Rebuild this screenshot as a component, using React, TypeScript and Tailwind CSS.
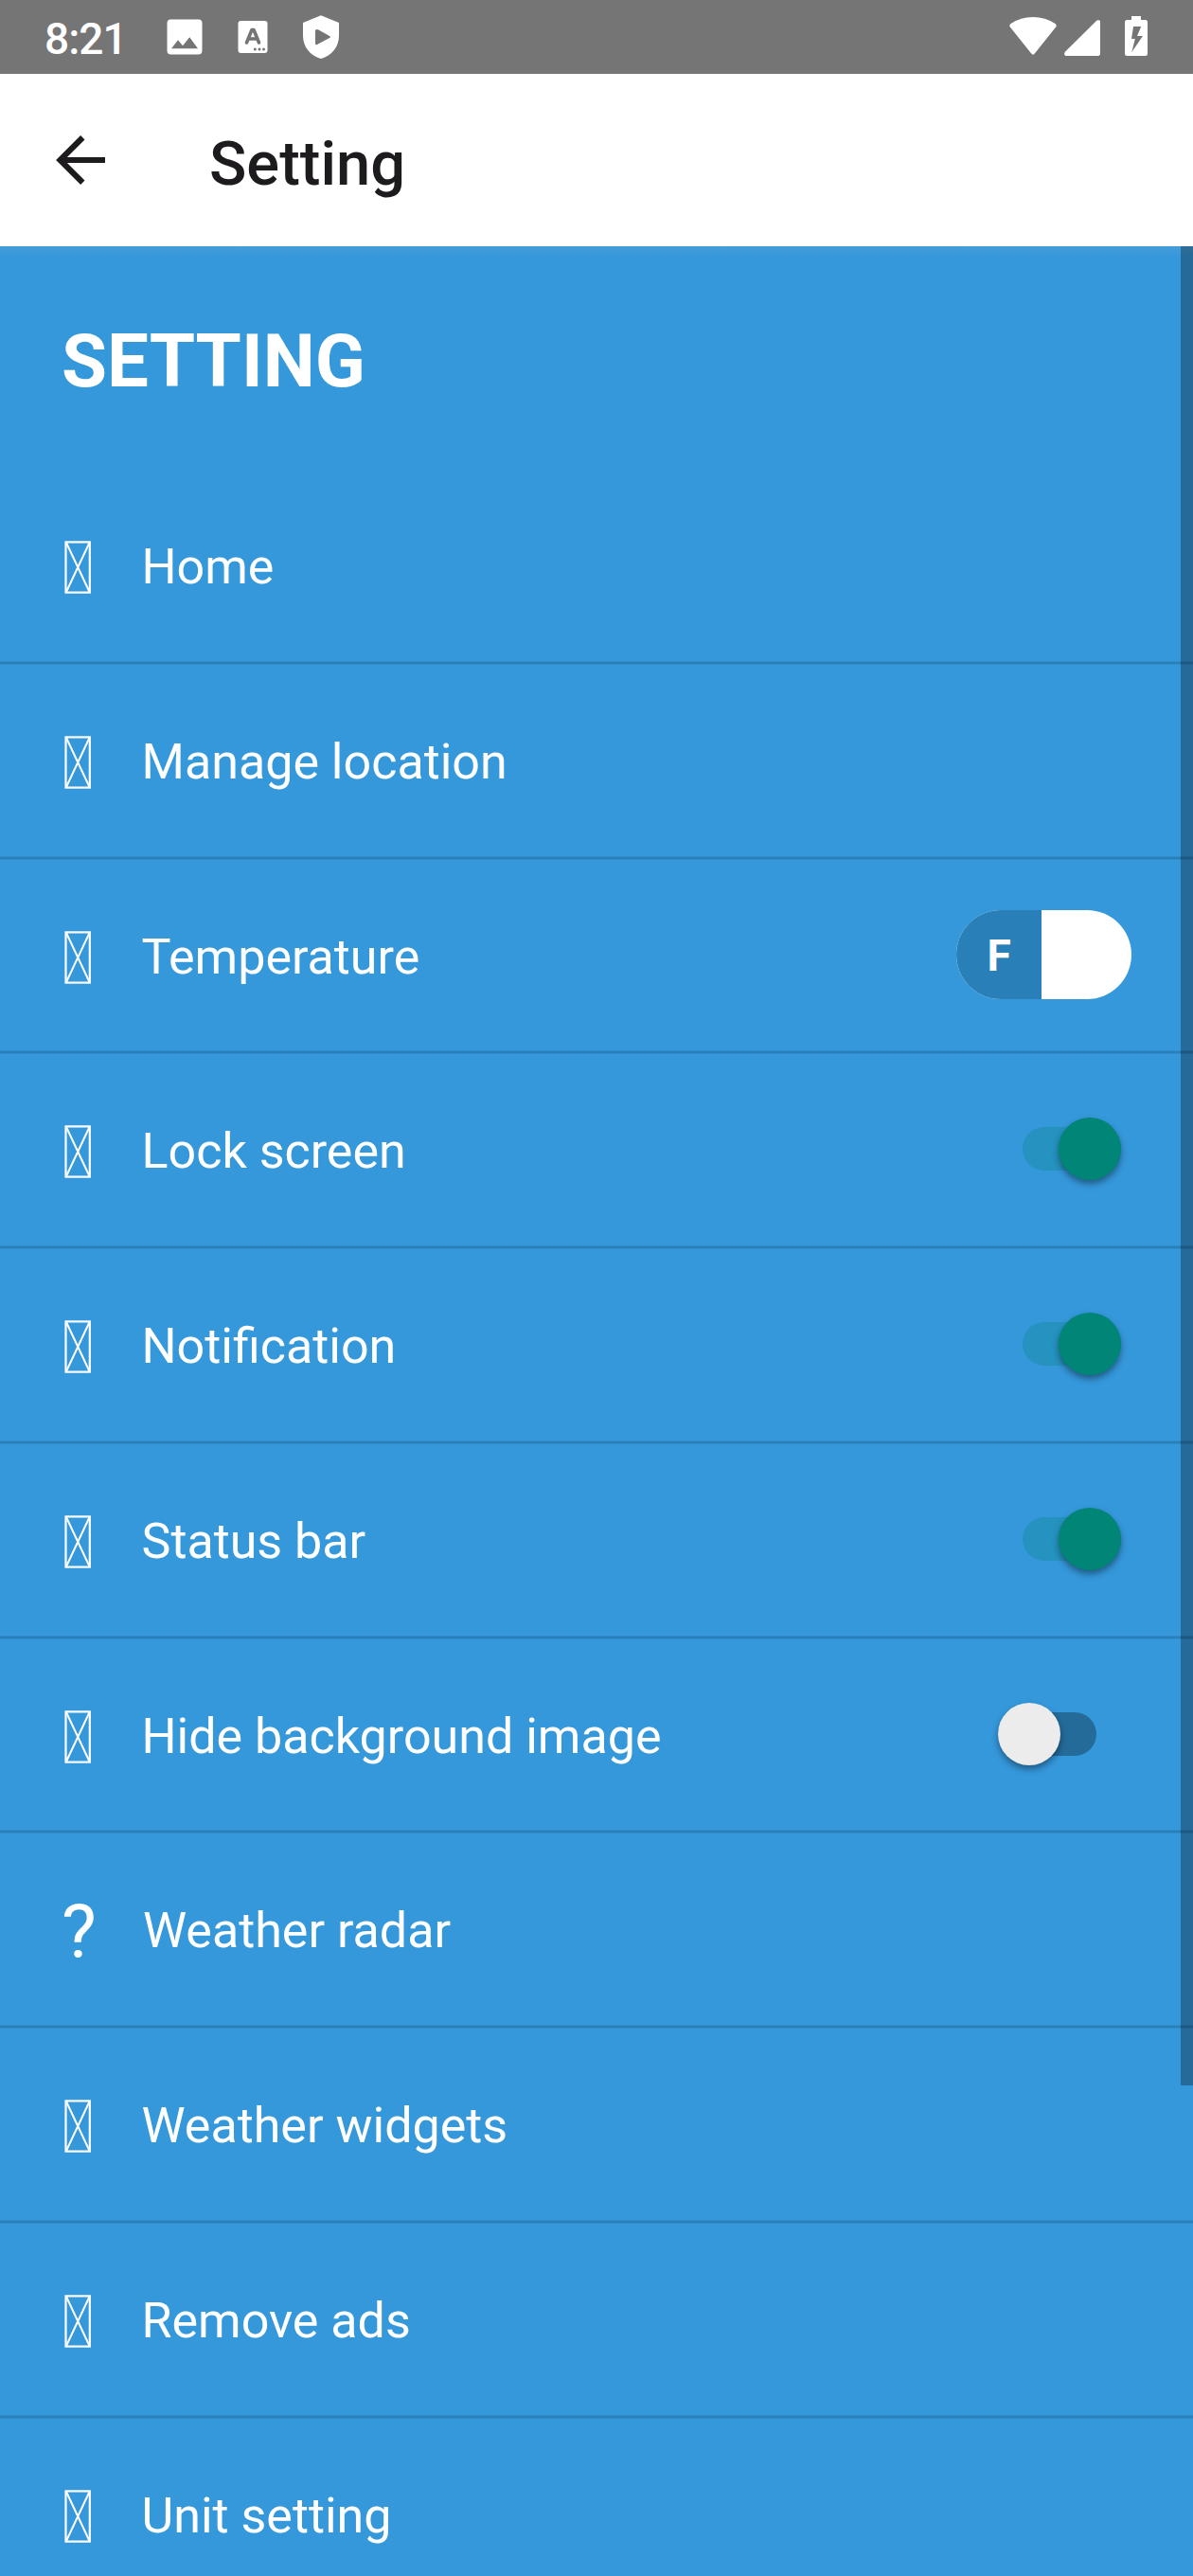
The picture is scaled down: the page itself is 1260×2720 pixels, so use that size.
import React from "react";

type Control = "unit" | "on" | "off";
type Row = { label: string; height: string; control?: Control; glyph?: "question" };

const rows: Row[] = [
  { label: "Home", height: "h-[206px]" },
  { label: "Manage location", height: "h-[206px]" },
  { label: "Temperature", height: "h-[205px]", control: "unit" },
  { label: "Lock screen", height: "h-[206px]", control: "on" },
  { label: "Notification", height: "h-[206px]", control: "on" },
  { label: "Status bar", height: "h-[206px]", control: "on" },
  { label: "Hide background image", height: "h-[205px]", control: "off" },
  { label: "Weather radar", height: "h-[206px]", glyph: "question" },
  { label: "Weather widgets", height: "h-[206px]" },
  { label: "Remove ads", height: "h-[206px]" },
  { label: "Unit setting", height: "h-[206px]" },
];

function StatusBar() {
  return (
    <div className="flex h-[78px] shrink-0 items-start bg-[#757575] text-white">
      <span className="ml-[47px] mt-[14px] w-[89px] text-[46px] font-medium leading-[54px] tracking-[-1px]">8:21</span>
      <svg className="ml-[40px] mt-[20px] h-[38px] w-[38px]" viewBox="0 0 38 38" fill="currentColor">
        <path fillRule="evenodd" d="M4.500 .5H33.500Q37.500 .5 37.500 4.500V33.500Q37.500 37.500 33.500 37.500H4.500Q.5 37.500 .5 33.500V4.500Q.5 .5 4.500 .5ZM5 31.200H33L24.200 19.200L17 28.200L12 22.200Z" />
      </svg>
      <svg className="ml-[37px] mt-[21px] h-[36px] w-[32px]" viewBox="0 0 32 36">
        <rect x=".5" y="1" width="31" height="34" rx="3" fill="currentColor" />
        <path d="M9.500 24L15 10.500H17L22.500 24M11.500 20H20.500" fill="none" stroke="#757575" strokeWidth="3.600" strokeLinecap="round" strokeLinejoin="round" />
        <g fill="#757575">
          <circle cx="18.300" cy="31" r="1.500" />
          <circle cx="23" cy="31" r="1.500" />
          <circle cx="27.500" cy="31" r="1.500" />
        </g>
      </svg>
      <svg className="ml-[36px] mt-[16px] h-[46px] w-[40px]" viewBox="0 0 40 46" fill="currentColor">
        <path fillRule="evenodd" d="M20 .3L39 8V22C39 33 31.500 43 20 46C8.500 43 1 33 1 22V8ZM14 16.500V29.800Q14 32 16 31L29 24Q31 23 29 22L17.500 15.500Q14 14 14 16.500Z" />
      </svg>
      <svg className="ml-auto mt-[17px] h-[43px] w-[50px]" viewBox="0 0 50 43" fill="currentColor">
        <path d="M.8 11.500Q-.5 9.500 1.500 8Q12 1 25 1T48.500 8Q50.500 9.500 49.200 11.500L27 39.300Q25 42 23 39.300Z" />
      </svg>
      <svg className="ml-[8px] mt-[21px] h-[38px] w-[38px]" viewBox="0 0 38 38" fill="currentColor">
        <path d="M.6 34L34.500 .6Q36 -.3 37.500 .6L38 2V36.500L36.500 38H1.500L0 36.500Z" />
      </svg>
      <svg className="ml-[26px] mr-[48px] mt-[17px] h-[42px] w-[24px]" viewBox="0 0 24 42" fill="currentColor">
        <path fillRule="evenodd" d="M7 0H17V4H21.500Q24 4 24 6.500V39.500Q24 42 21.500 42H2.500Q0 42 0 39.500V6.500Q0 4 2.500 4H7ZM9 11L7 24H10.800L7.300 38L19 21H13L17.200 11Z" />
      </svg>
    </div>
  );
}

function Toolbar() {
  return (
    <header className="flex h-[182px] shrink-0 items-center bg-white text-[#1d1b1e]">
      <svg className="ml-[59px] h-[52px] w-[52px]" viewBox="0 0 52 52" fill="none" stroke="currentColor" strokeWidth="6.200">
        <path d="M52 26H6M28.300 2.200L4.500 26L28.300 49.800" />
      </svg>
      <h1 className="ml-[110px] mt-[8px] text-[65px] font-medium leading-[74px]">Setting</h1>
    </header>
  );
}

function MissingGlyph() {
  return (
    <svg className="mt-[3px] h-[56px] w-[28px]" viewBox="0 0 28 56" fill="none" stroke="white">
      <rect x="1.500" y="1.400" width="25.300" height="53.200" strokeWidth="2.200" />
      <path d="M2 2L26.500 54M26.500 2L2 54" strokeWidth="2" />
    </svg>
  );
}

function UnitSwitch() {
  return (
    <div className="absolute right-[65px] top-[53px] flex h-[94px] w-[185px] overflow-hidden rounded-[47px] bg-white">
      <span className="flex w-[90px] items-center justify-center bg-[#297fb8] pt-[1px] text-[46px] font-bold leading-none">F</span>
    </div>
  );
}

function Toggle({ on }: { on: boolean }) {
  return on ? (
    <div className="absolute right-[76px] top-[67px] flex h-[66px] w-[104px] items-center">
      <span className="h-[46px] w-full rounded-full bg-[#2592bf]" />
      <span className="absolute right-0 h-[66px] w-[66px] rounded-full bg-[#018577] shadow-[0_4px_7px_rgba(0,0,0,0.4)]" />
    </div>
  ) : (
    <div className="absolute right-[102px] top-[67px] flex h-[66px] w-[104px] items-center">
      <span className="h-[46px] w-full rounded-full bg-[#246b9a]" />
      <span className="absolute left-0 h-[66px] w-[66px] rounded-full bg-[#ececec] shadow-[0_4px_7px_rgba(0,0,0,0.4)]" />
    </div>
  );
}

function Divider() {
  return (
    <div className="absolute inset-x-0 bottom-0 h-[4px] border-y border-[#308cca] bg-[#297fb8]" />
  );
}

function SettingRow({ row }: { row: Row }) {
  return (
    <li className={`relative flex shrink-0 items-start ${row.height}`}>
      <div className="flex h-[202px] items-center pl-[68px]">
        {row.glyph ? (
          <>
            <span className="w-[30px] -translate-x-[3px] pt-[8px] text-[78px] leading-none">?</span>
            <span className="ml-[53px] pt-[4px] text-[52px] leading-[62px]">{row.label}</span>
          </>
        ) : (
          <>
            <MissingGlyph />
            <span className="ml-[53.500px] pt-[4px] text-[52px] leading-[62px]">{row.label}</span>
          </>
        )}
      </div>
      {row.control === "unit" && <UnitSwitch />}
      {row.control === "on" && <Toggle on />}
      {row.control === "off" && <Toggle on={false} />}
      <Divider />
    </li>
  );
}

export default function App() {
  return (
    <div className="flex h-[2720px] w-[1260px] flex-col overflow-hidden font-[Roboto,sans-serif]">
      <StatusBar />
      <Toolbar />
      <main className="relative flex-1 overflow-hidden bg-[#3598db] text-white">
        <div className="absolute inset-x-0 top-0 h-[10px] bg-gradient-to-b from-[#459dd8] to-[#3598db]" />
        <h2 className="flex h-[236px] items-center pl-[65px] pt-[8px] text-[78px] font-bold leading-none">SETTING</h2>
        <ul className="flex flex-col">
          {rows.map((row) => (
            <SettingRow key={row.label} row={row} />
          ))}
        </ul>
        <div className="absolute right-0 top-0 h-[1942px] w-[13px] bg-black/30" />
      </main>
    </div>
  );
}
